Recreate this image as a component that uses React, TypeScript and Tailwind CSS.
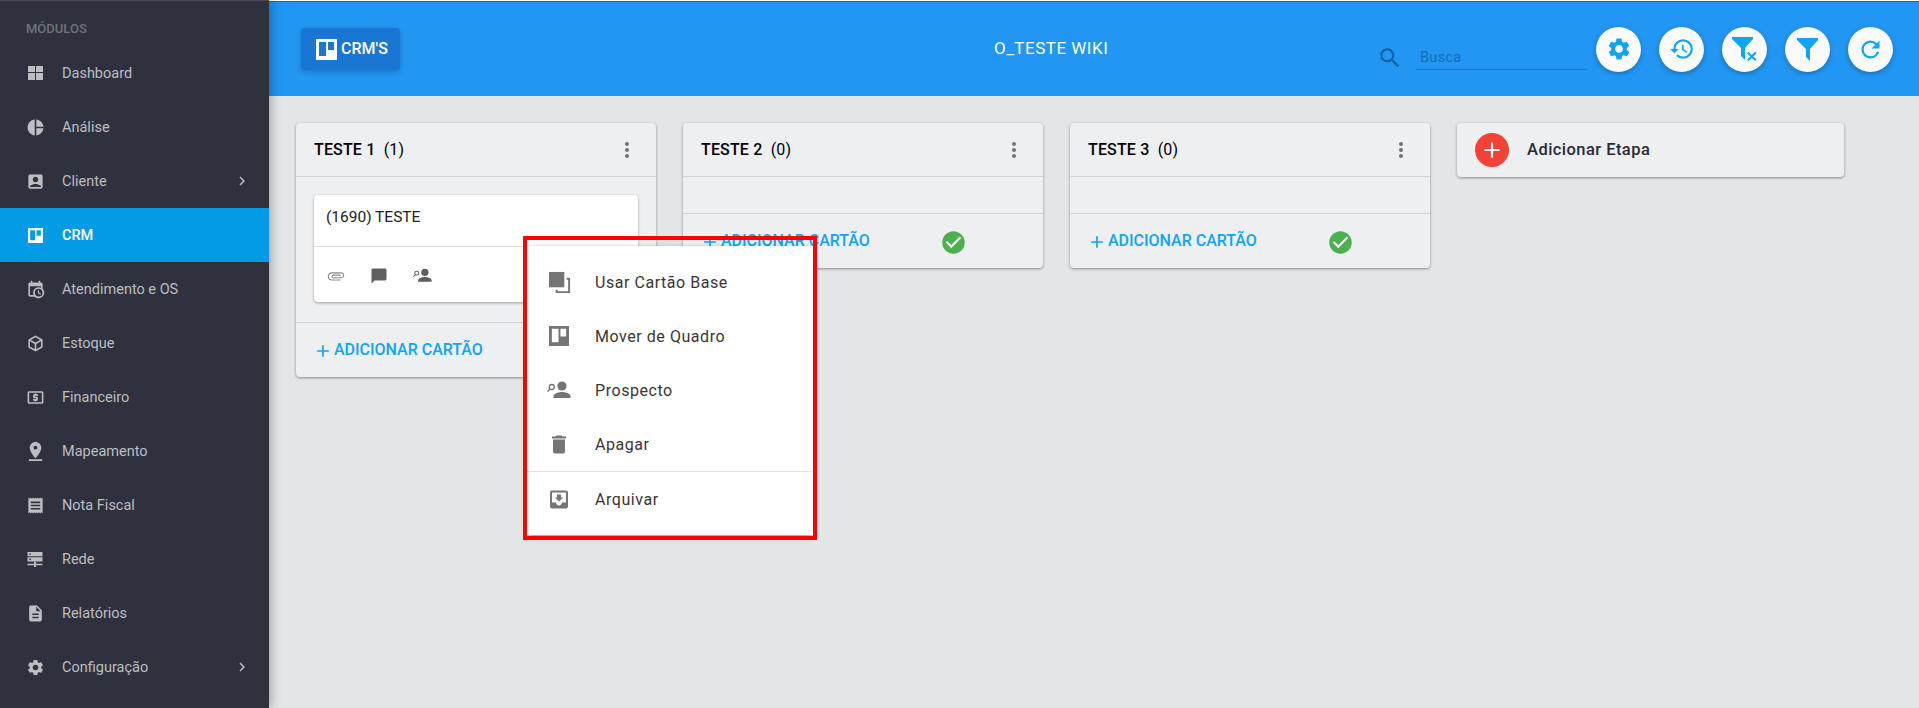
import type { ReactNode } from "react";
import {
  MdAccountBox,
  MdAdd,
  MdAttachFile,
  MdCheckCircle,
  MdChevronRight,
  MdDelete,
  MdDescription,
  MdHistory,
  MdLocalAtm,
  MdMoreVert,
  MdMoveToInbox,
  MdPieChart,
  MdPinDrop,
  MdReceipt,
  MdRefresh,
  MdSearch,
  MdSettings,
  MdChatBubble,
} from "react-icons/md";

const font = "font-['Roboto','Liberation_Sans',sans-serif]";

function Trello({ className = "" }: { className?: string }) {
  return (
    <svg viewBox="0 0 21 21" className={className} fill="currentColor">
      <path fillRule="evenodd" d="M0 0H21V21H0ZM3 3V17H10V3ZM12 3V11H18V3Z" />
    </svg>
  );
}

function Quilt({ className = "" }: { className?: string }) {
  return (
    <svg viewBox="0 0 15 14" className={className} fill="currentColor">
      <rect x="0" y="0" width="7" height="6" />
      <rect x="8" y="0" width="7" height="6" />
      <rect x="0" y="7" width="7" height="7" />
      <rect x="8" y="7" width="7" height="7" />
    </svg>
  );
}

function CalendarClock({ className = "" }: { className?: string }) {
  return (
    <svg viewBox="0 0 24 24" className={className} fill="currentColor">
      <path d="M15,13H16.5V15.82L18.94,17.23L18.19,18.53L15,16.69V13M19,8H5V19H9.67C9.24,18.09 9,17.07 9,16A7,7 0 0,1 16,9C17.07,9 18.09,9.24 19,9.67V8M5,21C3.89,21 3,20.1 3,19V5C3,3.89 3.89,3 5,3H6V1H8V3H16V1H18V3H19A2,2 0 0,1 21,5V11.1C22.24,12.36 23,14.09 23,16A7,7 0 0,1 16,23C14.09,23 12.36,22.24 11.1,21H5M16,11.15A4.85,4.85 0 0,0 11.15,16C11.15,18.68 13.32,20.85 16,20.85A4.85,4.85 0 0,0 20.85,16C20.85,13.32 18.68,11.15 16,11.15Z" />
    </svg>
  );
}

function Cube({ className = "" }: { className?: string }) {
  return (
    <svg viewBox="0 0 24 24" className={className} fill="currentColor">
      <path d="M21,16.5C21,16.88 20.79,17.21 20.47,17.38L12.57,21.82C12.41,21.94 12.21,22 12,22C11.79,22 11.59,21.94 11.43,21.82L3.53,17.38C3.21,17.21 3,16.88 3,16.5V7.5C3,7.12 3.21,6.79 3.53,6.62L11.43,2.18C11.59,2.06 11.79,2 12,2C12.21,2 12.41,2.06 12.57,2.18L20.47,6.62C20.79,6.79 21,7.12 21,7.5V16.5M12,4.15L6.04,7.5L12,10.85L17.96,7.5L12,4.15M5,15.91L11,19.29V12.58L5,9.21V15.91M19,15.91V9.21L13,12.58V19.29L19,15.91Z" />
    </svg>
  );
}

function ServerNetwork({ className = "" }: { className?: string }) {
  return (
    <svg viewBox="0 0 16 16" className={className} fill="currentColor">
      <path
        fillRule="evenodd"
        d="M0 0H16V4.5H0ZM2 1.6V3H3.6V1.6ZM0 5.5H16V10H0ZM2 7V8.4H3.6V7Z"
      />
      <path d="M7 10H9V12.6H16V14H9V16H7V14H0V12.6H7Z" />
    </svg>
  );
}

function Funnel({ className = "" }: { className?: string }) {
  return (
    <svg viewBox="0 0 21 23" className={className} fill="currentColor">
      <path d="M0 0H21V2L13 11V23L9 19V11L0 2Z" />
    </svg>
  );
}

function FunnelRemove({ className = "" }: { className?: string }) {
  return (
    <svg viewBox="0 0 26 24" className={className} fill="currentColor">
      <path d="M0 0H21V2L13 11V23L9 19V11L0 2Z" />
      <path d="M15 16.2L16.5 14.7L19.8 18L23.1 14.7L24.6 16.2L21.3 19.5L24.6 22.8L23.1 24L19.8 21L16.5 24L15 22.8L18.3 19.5Z" />
    </svg>
  );
}

function AccountKey({ className = "" }: { className?: string }) {
  return (
    <svg viewBox="0 0 24 24" className={className} fill="currentColor">
      <circle cx="15" cy="8" r="4.6" />
      <path d="M15 14C11.5 14 6.5 15.6 6.5 18.2V20H23.5V18.2C23.5 15.6 18.5 14 15 14Z" />
      <circle cx="4.8" cy="9" r="2.5" fill="none" stroke="currentColor" strokeWidth="1.3" />
      <path d="M2.6 10.6L3.5 11.6L0.9 14L0 13Z" />
    </svg>
  );
}

function BaseCard({ className = "" }: { className?: string }) {
  return (
    <svg viewBox="0 0 24 24" className={className} fill="currentColor">
      <rect x="1" y="1" width="16" height="16" />
      <path d="M19.5 7H23V23H8V19.5H10V21H21V9H19.5Z" />
    </svg>
  );
}

const modules: { label: string; icon: ReactNode; arrow?: boolean; active?: boolean }[] = [
  { label: "Dashboard", icon: <Quilt className="h-[14px] w-[15px]" /> },
  { label: "Análise", icon: <MdPieChart size={19} /> },
  { label: "Cliente", icon: <MdAccountBox size={19} />, arrow: true },
  { label: "CRM", icon: <Trello className="h-[15px] w-[15px]" />, active: true },
  { label: "Atendimento e OS", icon: <CalendarClock className="h-[19px] w-[19px]" /> },
  { label: "Estoque", icon: <Cube className="h-[19px] w-[19px]" /> },
  { label: "Financeiro", icon: <MdLocalAtm size={19} /> },
  { label: "Mapeamento", icon: <MdPinDrop size={23} /> },
  { label: "Nota Fiscal", icon: <MdReceipt size={19} /> },
  { label: "Rede", icon: <ServerNetwork className="h-[15px] w-[16px]" /> },
  { label: "Relatórios", icon: <MdDescription size={19} /> },
  { label: "Configuração", icon: <MdSettings size={19} />, arrow: true },
];

function Sidebar() {
  return (
    <aside className="relative z-10 w-[269px] shrink-0 border-t border-[#44474f] bg-[#2f323e] shadow-[2px_0_10px_rgba(0,0,0,0.3)]">
      <div className="h-[45px] pl-[26px] pt-[19px] text-[13px] font-medium leading-[18px] text-[#70737b]">
        MÓDULOS
      </div>
      {modules.map((m) => (
        <div
          key={m.label}
          className={`flex h-[54px] items-center ${m.active ? "bg-[#039be5] font-medium text-white" : "text-[#bcbec1]"}`}
        >
          <span className="flex w-[62px] shrink-0 items-center justify-center pl-[16px] pr-[8px]">{m.icon}</span>
          <span className="pt-[2px] text-[14.5px]">{m.label}</span>
          {m.arrow && <MdChevronRight size={18} className="ml-auto mr-[18px]" />}
        </div>
      ))}
    </aside>
  );
}

function RoundButton({ children }: { children: ReactNode }) {
  return (
    <button className="flex h-[45px] w-[45px] items-center justify-center rounded-full bg-[#fafafa] text-[#0ea5f7] shadow-[0_2px_5px_rgba(0,0,0,0.25)]">
      {children}
    </button>
  );
}

function Header() {
  return (
    <header className="flex h-[95px] shrink-0 items-center border-t border-[#1e64a0] bg-[#2196f3] pl-[32px] pr-[26px]">
      <button className="flex h-[42px] w-[99px] items-center gap-[4px] rounded bg-[#1976d2] pl-[15px] text-[16px] font-medium text-white shadow-[0_2px_5px_rgba(0,0,0,0.2)]">
        <Trello className="h-[21px] w-[21px] shrink-0" />
        CRM'S
      </button>
      <div className="ml-[594px] text-[17px] tracking-[0.5px] text-white">O_TESTE WIKI</div>
      <div className="ml-auto flex items-center gap-[18px]">
        <div className="mr-[-9px] mt-[18px] flex items-center text-[#15609e]">
          <MdSearch size={26} className="mr-[13px]" />
          <div className="w-[171px] border-b border-[#1c78c9] pl-[4px] text-[14.5px] leading-[22px] tracking-[0.3px] text-[#1a6cb4]">
            Busca
          </div>
        </div>
        <RoundButton><MdSettings size={26} /></RoundButton>
        <RoundButton><MdHistory size={26} /></RoundButton>
        <RoundButton><FunnelRemove className="h-[24px] w-[26px]" /></RoundButton>
        <RoundButton><Funnel className="h-[23px] w-[21px]" /></RoundButton>
        <RoundButton><MdRefresh size={27} /></RoundButton>
      </div>
    </header>
  );
}

function AddCard({ check }: { check?: boolean }) {
  return (
    <div className="flex h-[55px] items-center border-t border-[#d0d1d5] pl-[18px] text-[#0ea5f7]">
      <MdAdd size={20} className="ml-[-1px] mr-[1px] mt-[1px] shrink-0" />
      <span className="w-[219px] text-[16px] font-medium">ADICIONAR CARTÃO</span>
      {check && <MdCheckCircle size={27} className="mt-[3px] text-[#4caf50]" />}
    </div>
  );
}

function Column({ title, count, children, check }: { title: string; count: number; children: ReactNode; check?: boolean }) {
  return (
    <section className="w-[360px] shrink-0 rounded bg-[#eeeff1] shadow-[0_1px_3px_rgba(0,0,0,0.4)]">
      <div className="flex h-[54px] items-center justify-between border-b border-[#d0d1d5] pl-[18px] pr-[17px] text-[16px] font-medium tracking-[0.15px] text-black">
        <span className="whitespace-pre">{title}  <span className="font-normal">({count})</span></span>
        <MdMoreVert size={24} className="text-[#70727a]" />
      </div>
      {children}
      <AddCard check={check} />
    </section>
  );
}

function Board() {
  return (
    <main className="flex flex-1 items-start gap-[27px] bg-[#e4e5e7] pl-[27px] pt-[27px]">
      <Column title="TESTE 1" count={1}>
        <div className="p-[18px] pb-[20px]">
          <div className="h-[107px] rounded bg-white shadow-[0_1px_3px_rgba(0,0,0,0.35)]">
            <div className="h-[52px] border-b border-[#e0e0e0] pl-[12px] pt-[12px] text-[15.5px] leading-[20px] text-[#222]">
              (1690) TESTE
            </div>
            <div className="flex h-[55px] items-center gap-[25px] pl-[13px] pt-[2px] text-[#5f5f5f]">
              <MdAttachFile size={18} className="rotate-90 text-[#8a8a8a]" />
              <MdChatBubble size={18} />
              <AccountKey className="h-[19px] w-[19px]" />
            </div>
          </div>
        </div>
      </Column>
      <Column title="TESTE 2" count={0} check>
        <div className="h-[36px]" />
      </Column>
      <Column title="TESTE 3" count={0} check>
        <div className="h-[36px]" />
      </Column>
      <section className="flex h-[54px] w-[387px] shrink-0 items-center gap-[18px] rounded bg-[#eeeff1] pl-[18px] text-[16.5px] font-medium tracking-[0.45px] text-[#2a2a35] shadow-[0_1px_3px_rgba(0,0,0,0.4)]">
        <span className="flex h-[34px] w-[34px] items-center justify-center rounded-full bg-[#f44336] text-white">
          <MdAdd size={26} />
        </span>
        Adicionar Etapa
      </section>
    </main>
  );
}

function MenuItem({ icon, label }: { icon: ReactNode; label: string }) {
  return (
    <div className="flex h-[54px] items-center pl-[20px] text-[16px] tracking-[0.55px] text-[#3a3535]">
      <span className="flex w-[24px] items-center justify-center text-[#757575]">{icon}</span>
      <span className="ml-[24px] pt-[2px]">{label}</span>
    </div>
  );
}

function CardMenu() {
  return (
    <>
      <div className="absolute left-[527px] top-[246px] z-20 w-[286px] bg-white py-[9px] shadow-[0_2px_6px_rgba(0,0,0,0.35)]">
        <MenuItem label="Usar Cartão Base" icon={<BaseCard className="h-[23px] w-[23px]" />} />
        <MenuItem label="Mover de Quadro" icon={<Trello className="h-[20px] w-[20px]" />} />
        <MenuItem label="Prospecto" icon={<AccountKey className="h-[26px] w-[26px]" />} />
        <MenuItem label="Apagar" icon={<MdDelete size={27} />} />
        <div className="border-t border-[#e0e0e0]">
          <MenuItem label="Arquivar" icon={<MdMoveToInbox size={25} />} />
        </div>
      </div>
      <div className="absolute left-[523px] top-[236px] z-30 h-[304px] w-[294px] border-4 border-[#ff0000]" />
    </>
  );
}

export default function App() {
  return (
    <div className={`relative flex h-screen w-full overflow-hidden ${font}`}>
      <Sidebar />
      <div className="flex min-w-0 flex-1 flex-col">
        <div className="h-px shrink-0 bg-white" />
        <Header />
        <Board />
      </div>
      <CardMenu />
    </div>
  );
}
